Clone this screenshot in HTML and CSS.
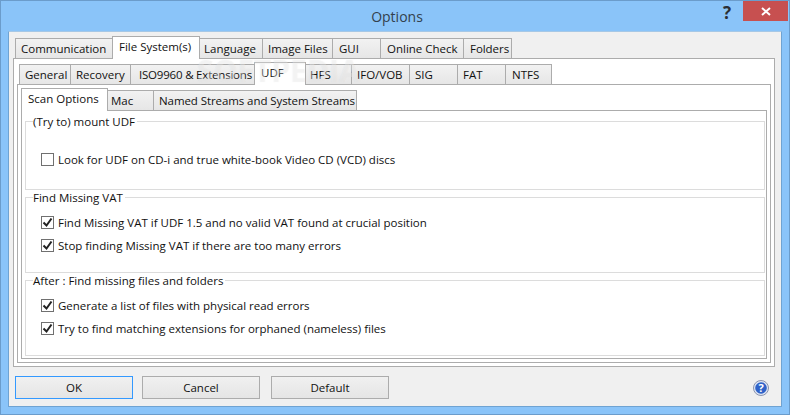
FILE: index.html
```html
<!DOCTYPE html>
<html lang="en">
<head>
<meta charset="utf-8">
<title>Options</title>
<link rel="stylesheet" href="styles.css">
</head>
<body>
<div class="window">
  <header class="titlebar">
    <span class="title">Options</span>
    <span class="help-btn">?</span>
    <span class="close-btn">
      <svg width="10" height="9" viewBox="0 0 10 9"><path d="M1 1l8 7M9 1L1 8" stroke="#fff" stroke-width="2" fill="none"/></svg>
    </span>
  </header>
  <main class="client">
    <div class="tabs tabs-1">
      <div class="tab t-comm">Communication</div>
      <div class="tab active t-fs">File System(s)</div>
      <div class="tab t-lang">Language</div>
      <div class="tab t-img">Image Files</div>
      <div class="tab t-gui">GUI</div>
      <div class="tab t-online">Online Check</div>
      <div class="tab t-fold">Folders</div>
    </div>
    <div class="panel panel-1">
      <div class="tabs tabs-2">
        <div class="tab t-gen">General</div>
        <div class="tab t-rec">Recovery</div>
        <div class="tab t-iso">ISO9960 &amp; Extensions</div>
        <div class="tab active t-udf">UDF</div>
        <div class="tab t-hfs">HFS</div>
        <div class="tab t-ifo">IFO/VOB</div>
        <div class="tab t-sig">SIG</div>
        <div class="tab t-fat">FAT</div>
        <div class="tab t-ntfs">NTFS</div>
      </div>
      <div class="panel panel-2">
        <div class="tabs tabs-3">
          <div class="tab active t-scan">Scan Options</div>
          <div class="tab t-mac">Mac</div>
          <div class="tab t-named">Named Streams and System Streams</div>
        </div>
        <div class="panel panel-3">
          <section class="group g-1">
            <h2 class="legend">(Try to) mount UDF</h2>
            <label class="check"><span class="box"></span>Look for UDF on CD-i and true white-book Video CD (VCD) discs</label>
          </section>
          <section class="group g-2">
            <h2 class="legend">Find Missing VAT</h2>
            <label class="check"><span class="box on"><svg width="11" height="11" viewBox="0 0 11 11"><path d="M1.5 5.5l3 3 5-7" stroke="#222" stroke-width="2" fill="none"/></svg></span>Find Missing VAT if UDF 1.5 and no valid VAT found at crucial position</label>
            <label class="check"><span class="box on"><svg width="11" height="11" viewBox="0 0 11 11"><path d="M1.5 5.5l3 3 5-7" stroke="#222" stroke-width="2" fill="none"/></svg></span>Stop finding Missing VAT if there are too many errors</label>
          </section>
          <section class="group g-3">
            <h2 class="legend">After : Find missing files and folders</h2>
            <label class="check"><span class="box on"><svg width="11" height="11" viewBox="0 0 11 11"><path d="M1.5 5.5l3 3 5-7" stroke="#222" stroke-width="2" fill="none"/></svg></span>Generate a list of files with physical read errors</label>
            <label class="check"><span class="box on"><svg width="11" height="11" viewBox="0 0 11 11"><path d="M1.5 5.5l3 3 5-7" stroke="#222" stroke-width="2" fill="none"/></svg></span>Try to find matching extensions for orphaned (nameless) files</label>
          </section>
        </div>
      </div>
    </div>
    <footer class="actions">
      <button class="btn default">OK</button>
      <button class="btn">Cancel</button>
      <button class="btn">Default</button>
      <svg class="help-icon" width="16" height="16" viewBox="0 0 16 16"><circle cx="8" cy="8" r="7.5" fill="#dfe6f5" stroke="#8a93ad"/><circle cx="8" cy="8" r="5.8" fill="#2f62c8"/><text x="8" y="12" class="help-q">?</text></svg>
    </footer>
  </main>
  <div class="watermark">SOFTPEDIA</div>
</div>
</body>
</html>
```
FILE: styles.css
```css
* { box-sizing: border-box; }
html, body { margin: 0; padding: 0; }
body { width: 790px; height: 415px; overflow: hidden; font-family: "Open Sans", "Noto Sans", sans-serif; font-size: 11.5px; color: #111; }
.window { position: relative; width: 790px; height: 415px; background: #8ac4f9; border: 1px solid #6b9ccb; padding: 0 7px 7px; display: flex; flex-direction: column; }
.titlebar { height: 30px; position: relative; flex: none; display: flex; justify-content: center; align-items: center; }
.title { font-size: 14px; color: #33414d; padding-left: 4px; }
.help-btn { position: absolute; left: 715px; top: 2px; font-size: 17px; font-weight: 700; color: #2b2f35; line-height: 20px; }
.close-btn { position: absolute; right: -6px; top: 0; width: 45px; height: 20px; background: #c75050; display: flex; align-items: center; justify-content: center; }
.client { flex: 1; background: #f0f0f0; border: 1px solid #6fa3d2; border-top-color: #a6c8e6; padding: 5px 6px 0 4px; display: flex; flex-direction: column; }
.tabs { display: flex; height: 22px; align-items: flex-end; position: relative; z-index: 1; margin-bottom: -1px; }
.tab { height: 21px; background: linear-gradient(#f2f2f2, #e6e6e6); border: 1px solid #acacac; border-left-width: 0; padding-left: 5px; line-height: 19px; white-space: nowrap; overflow: hidden; flex: none; }
.tab:first-child { border-left-width: 1px; }
.tab.active { height: 23px; background: #fff; border-left-width: 1px; border-bottom: 0; line-height: 20px; padding-left: 6px; position: relative; margin-right: -1px; margin-left: -1px; z-index: 2; }
.tab.active:first-child { margin-left: 0; }
.panel { background: #fff; border: 1px solid #acacac; }
.panel-1 { height: 309px; flex: none; padding: 5px 3px 3px 3px; }
.panel-2 { height: 279px; padding: 3px 3px 3px 3px; }
.panel-3 { height: 249px; padding: 10px 1px 0 3px; display: flex; flex-direction: column; gap: 7px; }
.tabs-1 { margin-left: 2px; }
.tabs-2 { height: 21px; margin-left: 2px; }
.tabs-3 { height: 23px; }
.t-comm { width: 98px; }
.t-fs { width: 88px; padding-left: 7px; }
.t-lang { width: 64px; }
.t-img { width: 70px; }
.t-gui { width: 48px; padding-left: 6px; }
.t-online { width: 83px; padding-left: 6px; }
.t-fold { width: 48px; padding-left: 6px; letter-spacing: -.05px; }
.t-gen { width: 52px; }
.t-rec { width: 60px; }
.t-iso { width: 124px; padding-left: 8px; letter-spacing: -.2px; }
.t-udf { width: 52px; padding-left: 8px; }
.t-hfs { width: 47px; }
.t-ifo { width: 58px; }
.t-sig { width: 48px; }
.t-fat { width: 48px; }
.t-ntfs { width: 46px; padding-left: 6px; }
.t-scan { width: 87px; padding-left: 7px; }
.t-mac { width: 47px; padding-left: 4px; }
.t-named { width: 203px; letter-spacing: -.08px; }
.group { position: relative; border: 1px solid #dcdcdc; flex: none; }
.g-1 { height: 69px; padding-top: 29px; }
.g-2 { height: 76px; padding-top: 16px; }
.g-3 { height: 76px; padding-top: 16px; }
.legend { position: absolute; left: 7px; top: -8px; margin: 0; font-size: 11.5px; font-weight: 400; line-height: 16px; background: #fff; padding-right: 2px; }
.check { display: flex; align-items: center; height: 16px; margin: 0 0 7px 15px; }
.box { width: 13px; height: 13px; border: 1px solid #707070; background: #fff; margin-right: 4px; display: flex; align-items: center; justify-content: center; flex: none; }
.actions { position: relative; flex: 1; display: flex; align-items: flex-start; gap: 9px; padding: 9px 0 0 2px; }
.btn { width: 118px; height: 23px; font: inherit; color: #111; background: linear-gradient(#f0f0f0, #e5e5e5); border: 1px solid #acacac; padding: 0; }
.btn:last-of-type { margin-left: 2px; }
.btn.default { border-color: #3399ff; }
.help-icon { position: absolute; right: 6px; top: 13px; }
.help-q { font-size: 11px; font-weight: 700; fill: #fff; text-anchor: middle; }
.watermark { position: absolute; left: 196px; top: 50px; font-size: 30px; font-weight: 700; color: rgba(255,255,255,.3); text-shadow: 0 0 1px rgba(150,150,150,.15); pointer-events: none; z-index: 5; white-space: nowrap; line-height: 40px; }
```
